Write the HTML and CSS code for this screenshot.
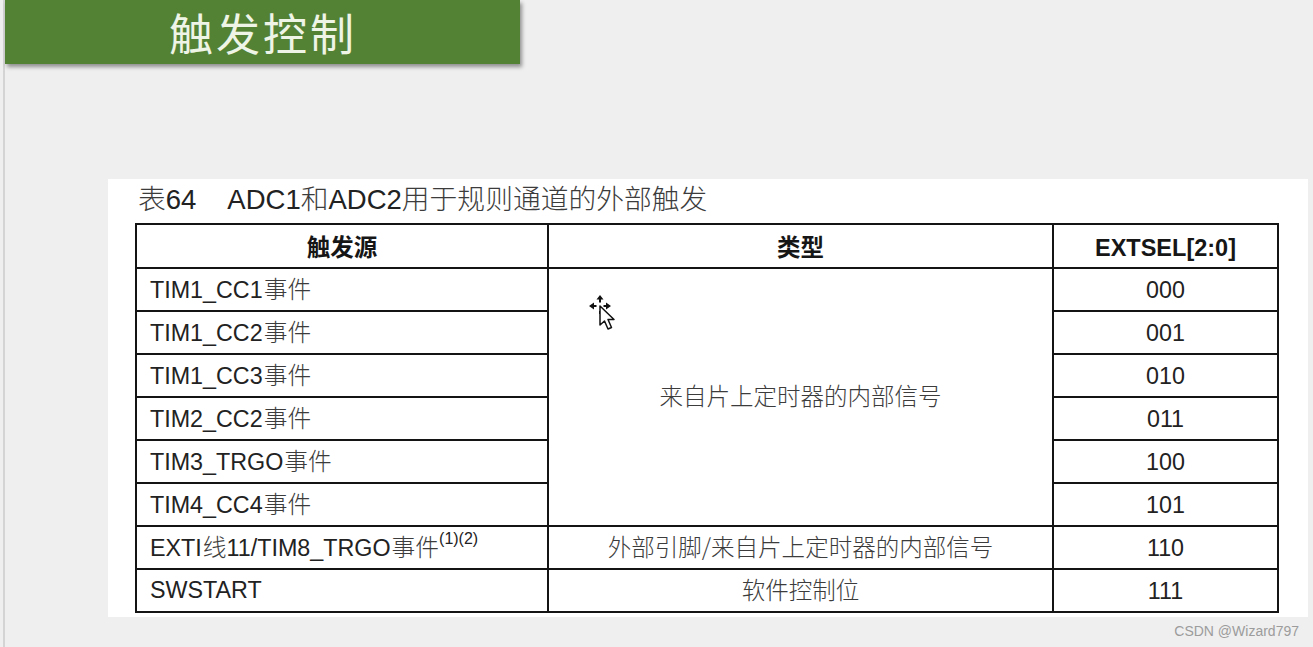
FILE: index.html
```html
<!DOCTYPE html>
<html lang="zh-CN">
<head>
<meta charset="utf-8">
<title>触发控制</title>
<link rel="stylesheet" href="styles.css">
</head>
<body>
<main class="slide">
  <header class="banner"><h1 class="banner-title">触发控制</h1></header>
  <section class="sheet">
    <h2 class="caption"><span class="cjk">表</span>64<span class="caption-gap"></span>ADC1<span class="cjk">和</span>ADC2<span class="cjk">用于规则通道的外部触发</span></h2>
    <table class="trigger-table">
      <colgroup><col class="col-source"><col class="col-type"><col class="col-code"></colgroup>
      <thead>
        <tr class="row-head"><th>触发源</th><th>类型</th><th>EXTSEL[2:0]</th></tr>
      </thead>
      <tbody>
        <tr><td class="source">TIM1_CC1<span class="cjk">事件</span></td><td class="type" rowspan="6"><span class="cjk">来自片上定时器的内部信号</span></td><td class="code">000</td></tr>
        <tr><td class="source">TIM1_CC2<span class="cjk">事件</span></td><td class="code">001</td></tr>
        <tr><td class="source">TIM1_CC3<span class="cjk">事件</span></td><td class="code">010</td></tr>
        <tr><td class="source">TIM2_CC2<span class="cjk">事件</span></td><td class="code">011</td></tr>
        <tr><td class="source">TIM3_TRGO<span class="cjk">事件</span></td><td class="code">100</td></tr>
        <tr><td class="source">TIM4_CC4<span class="cjk">事件</span></td><td class="code">101</td></tr>
        <tr><td class="source">EXTI<span class="cjk">线</span>11/TIM8_TRGO<span class="cjk">事件</span><sup class="note">(1)(2)</sup></td><td class="type"><span class="cjk">外部引脚/来自片上定时器的内部信号</span></td><td class="code">110</td></tr>
        <tr><td class="source">SWSTART</td><td class="type"><span class="cjk">软件控制位</span></td><td class="code">111</td></tr>
      </tbody>
    </table>
  </section>
  <svg class="cursor" width="28" height="38" viewBox="0 0 28 38" aria-hidden="true">
    <g fill="#111">
      <path d="M11 0l3.500 4.500h-2.500v3h-2v-3H7.500z"/>
      <path d="M0 11l5-3.500v2.500h2.500v2H5v2.500z"/>
      <path d="M22 11l-5-3.500v2.500h-2.500v2H17v2.500z"/>
      <rect x="10" y="16" width="2" height="3"/>
    </g>
    <path d="M11 11v19l4.500-4 3.500 8 3.500-1.500-3.500-8h6z" fill="#fff" stroke="#111" stroke-width="1.500" stroke-linejoin="round"/>
  </svg>
  <footer class="watermark">CSDN @Wizard797</footer>
</main>
</body>
</html>
```
FILE: styles.css
```css
* { box-sizing: border-box; }
html, body { margin: 0; height: 100%; }
body {
  background: #efefef;
  overflow: hidden;
  font-family: "Liberation Sans", "Noto Sans CJK SC", sans-serif;
  color: #1a1a1a;
}
.slide {
  position: relative;
  height: 647px;
  margin-left: 3px;
  border-left: 2px solid #d4d4d4;
  display: flex;
  flex-direction: column;
  align-items: flex-start;
}
.banner {
  width: 515px;
  height: 64px;
  background: #548235;
  box-shadow: 2px 3px 4px rgba(0, 0, 0, 0.4);
  padding-left: 164px;
  display: flex;
  align-items: center;
}
.banner-title {
  margin: 0;
  font-family: "Noto Sans CJK SC", sans-serif;
  font-size: 44px;
  font-weight: 400;
  letter-spacing: 3px;
  line-height: 1;
  color: #eef5e6;
  white-space: nowrap;
}
.sheet {
  margin: 115px 0 0 103px;
  width: 1200px;
  height: 438px;
  background: #fff;
  padding: 0 0 0 27px;
}
.caption {
  margin: 0;
  height: 44px;
  padding-left: 3px;
  font-size: 27.500px;
  font-weight: 400;
  line-height: 36px;
  color: #222;
  white-space: nowrap;
}
.caption-gap { display: inline-block; width: 31px; }
.cjk {
  font-family: "Noto Sans CJK SC", sans-serif;
  font-weight: 300;
  font-size: 1.010em;
  color: #3c3c3c;
}
.trigger-table {
  width: 1142px;
  table-layout: fixed;
  border-collapse: collapse;
  border: 2px solid #141414;
  font-size: 23.300px;
}
.col-source { width: 412px; }
.col-type { width: 505px; }
.col-code { width: 225px; }
.trigger-table th, .trigger-table td {
  border: 2px solid #141414;
  padding: 0;
  height: 43px;
  line-height: 26px;
}
.row-head th {
  height: 44px;
  padding-top: 3px;
  font-size: 23.500px;
  font-weight: 700;
  text-align: center;
  font-family: "Liberation Sans", "Noto Sans CJK SC", sans-serif;
  color: #161616;
}
.trigger-table td.source { padding: 0 0 2px 13px; white-space: nowrap; color: #222; }
.source .cjk { margin-left: 1px; font-size: 1.020em; }
.trigger-table td.type { padding-bottom: 2px; text-align: center; }
.trigger-table td.code { text-align: center; color: #222; }
.note { font-size: 16px; line-height: 0; vertical-align: 12px; }
.cursor { position: absolute; left: 584px; top: 295px; }
.watermark {
  position: absolute;
  right: 14px;
  bottom: 8px;
  font-size: 14px;
  color: #9c9c9c;
}
```
